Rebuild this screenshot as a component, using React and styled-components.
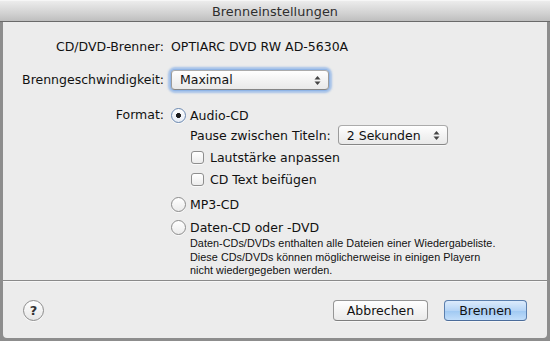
import React from "react";
import styled, { createGlobalStyle } from "styled-components";

const GlobalStyle = createGlobalStyle`
    html, body {
        margin: 0;
        padding: 0;
        background: #8d8d8d;
    }
    body {
        font-family: "DejaVu Sans", "Liberation Sans", sans-serif;
        -webkit-font-smoothing: antialiased;
    }
`;

const Window = styled.div`
    box-sizing: border-box;
    width: 550px;
    height: 341px;
    display: flex;
    flex-direction: column;
    background: #8d8d8d;
    border-radius: 0 0 5px 5px;
    overflow: hidden;
`;

const TitleBar = styled.div`
    box-sizing: border-box;
    height: 22px;
    flex: none;
    display: flex;
    align-items: center;
    justify-content: center;
    background: linear-gradient(#ececec, #d2d2d2 60%, #bebebe);
    border-top: 1px solid #f6f6f6;
    border-bottom: 1px solid #6a6a6a;
    font-size: 12.8px;
    color: #2e2e2e;
    letter-spacing: 0.1px;
`;

const Sheet = styled.div`
    flex: 1;
    margin: 0 3px 3px;
    display: flex;
    flex-direction: column;
    background: #ececec;
    border-radius: 0 0 4px 4px;
`;

const Form = styled.div`
    box-sizing: border-box;
    height: 259px;
    padding-top: 15px;
    display: grid;
    grid-template-columns: 161px 1fr;
    column-gap: 7px;
    align-content: start;
    border-bottom: 1px solid #8a8a8a;
    font-size: 12.5px;
    color: #111;
`;

const Label = styled.div`
    text-align: right;
    height: ${(p) => p.$h || 20}px;
    margin-top: ${(p) => p.$mt || 0}px;
    line-height: ${(p) => p.$h || 20}px;
    white-space: nowrap;
`;

const Value = styled.div`
    height: ${(p) => p.$h || 20}px;
    margin-top: ${(p) => p.$mt || 0}px;
    line-height: ${(p) => p.$h || 20}px;
    display: flex;
    align-items: center;
    white-space: nowrap;
`;

const Options = styled.div`
    grid-column: 2;
    display: flex;
    flex-direction: column;
`;

const Row = styled.div`
    display: flex;
    align-items: center;
    height: ${(p) => p.$h || 18}px;
    margin-top: ${(p) => p.$mt || 0}px;
    padding-left: ${(p) => p.$indent || 0}px;
    gap: ${(p) => p.$gap || 4}px;
    white-space: nowrap;
`;

const Popup = styled.div`
    box-sizing: border-box;
    width: ${(p) => p.$w}px;
    height: 20px;
    display: flex;
    align-items: center;
    justify-content: space-between;
    padding: 0 7px 0 8px;
    border: 1px solid #9b9b9b;
    border-top-color: #ababab;
    border-bottom-color: #868686;
    border-radius: 4px;
    background: linear-gradient(#ffffff, #f3f3f3 50%, #e9e9e9);
    box-shadow: ${(p) =>
        p.$focus
            ? "0 0 0 1px #8fb4e6, 0 0 2px 3px rgba(110, 160, 230, 0.55)"
            : "0 1px 0 rgba(255,255,255,0.6)"};
    color: #111;
`;

const Arrows = () => (
    <svg width="7" height="11" viewBox="0 0 7 11">
        <path d="M3.5 1 L6.5 4.5 L0.5 4.5 Z" fill="#444" />
        <path d="M3.5 10 L6.5 6.5 L0.5 6.5 Z" fill="#444" />
    </svg>
);

const Radio = styled.span`
    box-sizing: border-box;
    width: 15px;
    height: 15px;
    flex: none;
    border-radius: 50%;
    border: 1px solid ${(p) => (p.$checked ? "#6a88b0" : "#8c8c8c")};
    background: ${(p) =>
        p.$checked
            ? "radial-gradient(circle, #1d1d1d 0 2.2px, transparent 2.8px), linear-gradient(#fdfdfd, #e6ecf5)"
            : "linear-gradient(#ffffff, #ebebeb)"};
    box-shadow: 0 1px 0 rgba(255,255,255,0.7);
`;

const Check = styled.span`
    box-sizing: border-box;
    width: 13px;
    height: 13px;
    flex: none;
    border-radius: 3px;
    border: 1px solid #8e8e8e;
    background: linear-gradient(#ffffff, #ececec);
    box-shadow: 0 1px 0 rgba(255,255,255,0.7);
`;

const Note = styled.div`
    padding-left: 19px;
    margin-top: 1px;
    font-family: "Liberation Sans", Arial, sans-serif;
    font-size: 10.8px;
    letter-spacing: 0.05px;
    line-height: 13.5px;
    color: #111;
`;

const Footer = styled.div`
    flex: 1;
    display: flex;
    align-items: center;
    justify-content: space-between;
    padding: 0 20px 0 20px;
    border-top: 1px solid #f7f7f7;
`;

const HelpButton = styled.div`
    box-sizing: border-box;
    width: 21px;
    height: 21px;
    border-radius: 50%;
    border: 1px solid #8c8c8c;
    background: linear-gradient(#ffffff, #e6e6e6);
    display: flex;
    align-items: center;
    justify-content: center;
    font-size: 13px;
    font-weight: bold;
    color: #333;
    box-shadow: 0 1px 0 rgba(255,255,255,0.8);
`;

const Buttons = styled.div`
    display: flex;
    gap: 16px;
`;

const Button = styled.div`
    box-sizing: border-box;
    width: ${(p) => p.$w}px;
    height: 21px;
    display: flex;
    align-items: center;
    justify-content: center;
    border-radius: 4px;
    font-size: 12.5px;
    color: #111;
    border: 1px solid ${(p) => (p.$primary ? "#5b7fae" : "#969696")};
    border-bottom-color: ${(p) => (p.$primary ? "#4b6c9a" : "#7e7e7e")};
    background: ${(p) =>
        p.$primary
            ? "linear-gradient(#dcebfc, #b6d5f6 50%, #9fc8f2 51%, #c2defa)"
            : "linear-gradient(#ffffff, #f4f4f4 50%, #eaeaea)"};
    box-shadow: 0 1px 0 rgba(255,255,255,0.6);
`;

export default function App() {
    return (
        <>
            <GlobalStyle />
            <Window>
                <TitleBar>Brenneinstellungen</TitleBar>
                <Sheet>
                    <Form>
                        <Label>CD/DVD-Brenner:</Label>
                        <Value>OPTIARC DVD RW AD-5630A</Value>

                        <Label $mt={13}>Brenngeschwindigkeit:</Label>
                        <Value $mt={13}>
                            <Popup $w={158} $focus>
                                <span>Maximal</span>
                                <Arrows />
                            </Popup>
                        </Value>

                        <Label $mt={16} $h={18}>Format:</Label>
                        <Options>
                            <Row $mt={16} $h={18} $gap={4}>
                                <Radio $checked />
                                <span>Audio-CD</span>
                            </Row>
                            <Row $h={20} $mt={1} $indent={19} $gap={7}>
                                <span>Pause zwischen Titeln:</span>
                                <Popup $w={110}>
                                    <span>2 Sekunden</span>
                                    <Arrows />
                                </Popup>
                            </Row>
                            <Row $mt={3} $indent={20} $gap={6}>
                                <Check />
                                <span>Lautstärke anpassen</span>
                            </Row>
                            <Row $mt={4} $indent={20} $gap={6}>
                                <Check />
                                <span>CD Text beifügen</span>
                            </Row>
                            <Row $mt={7} $gap={4}>
                                <Radio />
                                <span>MP3-CD</span>
                            </Row>
                            <Row $mt={5} $gap={4}>
                                <Radio />
                                <span>Daten-CD oder -DVD</span>
                            </Row>
                            <Note>
                                Daten-CDs/DVDs enthalten alle Dateien einer Wiedergabeliste.
                                <br />
                                Diese CDs/DVDs können möglicherweise in einigen Playern
                                <br />
                                nicht wiedergegeben werden.
                            </Note>
                        </Options>
                    </Form>
                    <Footer>
                        <HelpButton>?</HelpButton>
                        <Buttons>
                            <Button $w={95}>Abbrechen</Button>
                            <Button $w={83} $primary>Brennen</Button>
                        </Buttons>
                    </Footer>
                </Sheet>
            </Window>
        </>
    );
}
